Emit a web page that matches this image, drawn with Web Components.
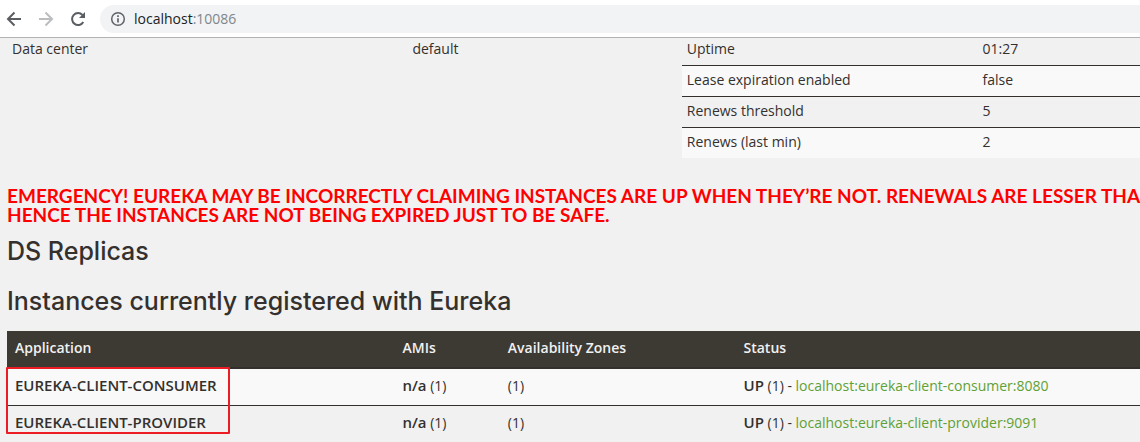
<!DOCTYPE html>
<html lang="en">
<head>
<meta charset="utf-8">
<title>Eureka</title>
<style>
body { margin: 0; background: #f1f1f1; color: #34302d; font: 14px/20px "Open Sans", "Noto Sans", sans-serif; overflow: hidden; }
</style>
</head>
<body>
<browser-bar></browser-bar>
<eureka-page>
  <status-table slot="general" kind="general"></status-table>
  <status-table slot="runtime" kind="runtime"></status-table>
  <instance-table slot="instances"></instance-table>
</eureka-page>
<script>
class BrowserBar extends HTMLElement {
  constructor() {
    super();
    this.attachShadow({ mode: "open" }).innerHTML = `
      <style>
        :host { display: flex; align-items: center; height: 37px; background: #fff; border-bottom: 1px solid #b0b2b3; }
        nav { display: flex; gap: 12px; padding: 0 12px 0 4px; }
        button { display: block; width: 20px; height: 20px; padding: 0; border: 0; background: none; color: #5a5d61; }
        button:disabled { color: #bbbdbf; }
        svg { display: block; }
        label { flex: 1; display: flex; align-items: center; gap: 8px; height: 28px; padding-left: 10px; background: #f1f3f4; border-radius: 14px 0 0 14px; color: #5f6368; }
        .address { color: #80868b; outline: none; }
        .address b { color: #202124; font-weight: 400; }
      </style>
      <nav aria-label="Navigation">
        <button aria-label="Back"><svg width="20" height="20" viewBox="0 0 20 20" fill="none" stroke="currentColor" stroke-width="2"><path d="M17 10H4.500M10.500 3.500L4 10l6.500 6.500"/></svg></button>
        <button aria-label="Forward" disabled><svg width="20" height="20" viewBox="0 0 20 20" fill="none" stroke="currentColor" stroke-width="2"><path d="M3 10h12.500M9.500 3.500L16 10l-6.500 6.500"/></svg></button>
        <button aria-label="Reload"><svg width="20" height="20" viewBox="0 0 20 20" fill="none" stroke="currentColor" stroke-width="2"><path d="M15.300 13A6 6 0 1 1 14.500 6"/><path d="M17 3v6h-6z" fill="currentColor" stroke="none"/></svg></button>
      </nav>
      <label>
        <svg width="16" height="16" viewBox="0 0 16 16" fill="none" stroke="currentColor" stroke-width="1.500"><circle cx="8" cy="8" r="6.300"/><path d="M8 7.200v4.300M8 4.300v1.700" stroke-width="1.700"/></svg>
        <span class="address" role="textbox" contenteditable="true" spellcheck="false" aria-label="Address"><b>localhost</b>:10086</span>
      </label>`;
  }
}
customElements.define("browser-bar", BrowserBar);

class EurekaPage extends HTMLElement {
  constructor() {
    super();
    this.attachShadow({ mode: "open" }).innerHTML = `
      <style>
        :host { display: block; padding-left: 7px; overflow: hidden; }
        .status { display: grid; grid-template-columns: 57% 58%; gap: 29px; align-items: start; }
        .warning { margin: 28px 0 12px; color: #f00; font: 700 19px/19px Lato, sans-serif; white-space: nowrap; }
        h1 { margin: 0 0 20px; font: 500 25px/30px Inter, sans-serif; }
        h1:last-of-type { margin-bottom: 15px; }
      </style>
      <div class="status"><slot name="general"></slot><slot name="runtime"></slot></div>
      <p class="warning">EMERGENCY! EUREKA MAY BE INCORRECTLY CLAIMING INSTANCES ARE UP WHEN THEY’RE NOT. RENEWALS ARE LESSER THAN<br>HENCE THE INSTANCES ARE NOT BEING EXPIRED JUST TO BE SAFE.</p>
      <h1>DS Replicas</h1>
      <h1>Instances currently registered with Eureka</h1>
      <slot name="instances"></slot>`;
  }
}
customElements.define("eureka-page", EurekaPage);

class StatusTable extends HTMLElement {
  static rows = {
    general: [["Data center", "default"]],
    runtime: [["Uptime", "01:27"], ["Lease expiration enabled", "false"], ["Renews threshold", "5"], ["Renews (last min)", "2"]]
  };
  connectedCallback() {
    const kind = this.getAttribute("kind");
    this.attachShadow({ mode: "open" }).innerHTML = `
      <style>
        :host { display: block; }
        table { width: 100%; border-collapse: separate; border-spacing: 0; table-layout: fixed; }
        th, td { padding: 4px 5px 6px; text-align: left; font-weight: 400; }
        th { width: ${kind === "general" ? 62 : 45}%; box-sizing: border-box; }
        tr:first-child > * { padding-top: 1px; }
        tr + tr > * { border-top: 1px solid #34302d; }
        tr:nth-child(even) { background: #f9f9f9; }
      </style>
      <table>${StatusTable.rows[kind].map(([k, v]) => `<tr><th scope="row">${k}</th><td>${v}</td></tr>`).join("")}</table>`;
  }
}
customElements.define("status-table", StatusTable);

class InstanceTable extends HTMLElement {
  constructor() {
    super();
    const row = (app, link) => `<tr><td><b>${app}</b></td><td><b>n/a</b> (1)</td><td>(1)</td><td><b>UP</b> (1) - <a href="#">${link}</a></td></tr>`;
    this.attachShadow({ mode: "open" }).innerHTML = `
      <style>
        :host { display: block; position: relative; }
        table { width: 100%; border-collapse: separate; border-spacing: 0; table-layout: fixed; }
        th, td { padding: 7px 8px 9px; text-align: left; white-space: nowrap; }
        th { box-sizing: border-box; background: #3d3933; color: #f1f1f1; font-weight: 600; border-bottom: 2px solid #34302d; }
        b { font-size: 15px; line-height: 1; font-weight: 600; }
        tbody tr:first-child { background: #f9f9f9; }
        tbody tr + tr td { border-top: 1px solid #34302d; }
        .app { width: 34.2%; } .ami { width: 9.3%; } .zone { width: 20.8%; }
        a { color: #5fa134; text-decoration: none; }
        .mark { position: absolute; left: -1px; top: 36px; width: 220px; height: 63px; border: 2px solid #ec1c24; border-radius: 1px; }
      </style>
      <table>
        <thead><tr><th class="app">Application</th><th class="ami">AMIs</th><th class="zone">Availability Zones</th><th>Status</th></tr></thead>
        <tbody>
          ${row("EUREKA-CLIENT-CONSUMER", "localhost:eureka-client-consumer:8080")}
          ${row("EUREKA-CLIENT-PROVIDER", "localhost:eureka-client-provider:9091")}
        </tbody>
      </table>
      <div class="mark"></div>`;
  }
}
customElements.define("instance-table", InstanceTable);
</script>
</body>
</html>
